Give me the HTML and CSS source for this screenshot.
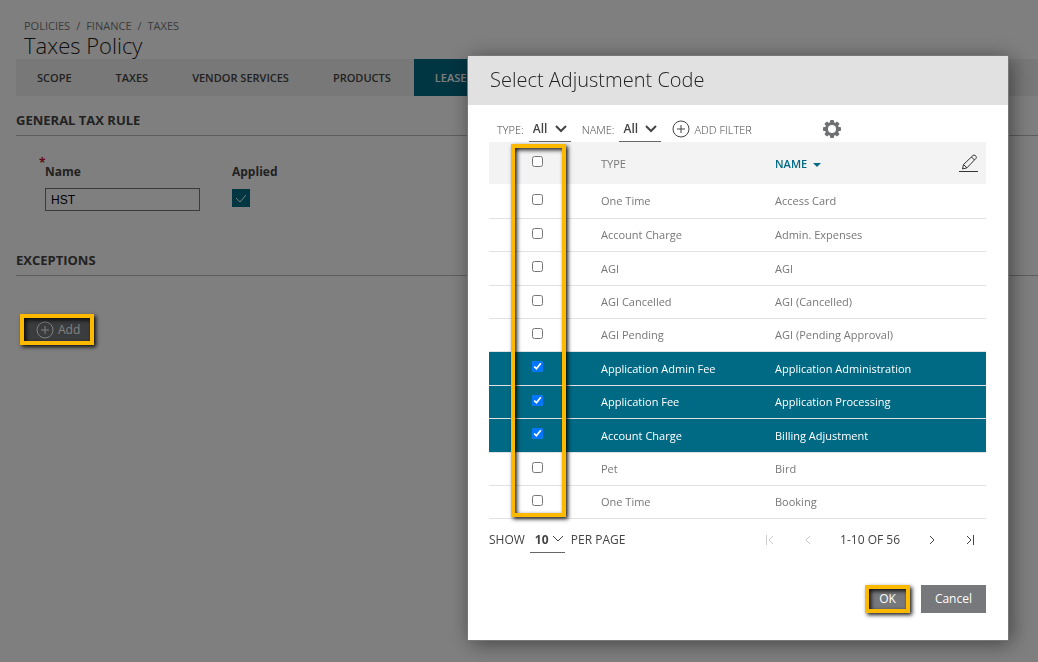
FILE: index.html
```
<!DOCTYPE html>
<html lang="en">
<head>
    <meta charset="UTF-8">
    <title>Taxes Policy</title>
    <link rel="stylesheet" href="styles.css">
</head>
<body>
    <main class="page">
        <nav class="breadcrumb">
            <a href="#">POLICIES</a><span>/</span><a href="#">FINANCE</a><span>/</span><a href="#">TAXES</a>
        </nav>
        <h1>Taxes Policy</h1>

        <nav class="tabs">
            <a href="#">SCOPE</a>
            <a href="#">TAXES</a>
            <a href="#">VENDOR SERVICES</a>
            <a href="#">PRODUCTS</a>
            <a href="#" class="active">LEASE</a>
        </nav>

        <h2>GENERAL TAX RULE</h2>
        <div class="rule-form">
            <div class="field name-field">
                <label for="ruleName"><span class="required">*</span>Name</label>
                <input type="text" id="ruleName" value="HST">
            </div>
            <div class="field">
                <label for="applied">Applied</label>
                <span class="check-box">
                    <input type="checkbox" id="applied" checked>
                    <svg viewBox="0 0 18 18"><path d="M4 9l4 4 6-7"/></svg>
                </span>
            </div>
        </div>

        <h2>EXCEPTIONS</h2>
        <div class="marked add-wrap">
            <button class="btn add-btn">
                <svg class="plus" viewBox="0 0 18 18"><circle cx="9" cy="9" r="8"/><path d="M5 9h8M9 5v8"/></svg>
                Add
            </button>
            <span class="marker"></span>
        </div>
    </main>

    <div class="overlay">
        <div class="modal" role="dialog" aria-labelledby="modalTitle">
            <header class="modal-header">
                <h2 id="modalTitle">Select Adjustment Code</h2>
            </header>

            <div class="modal-body">
                <div class="filters">
                    <label for="typeFilter">TYPE:</label>
                    <span class="select">
                        <select id="typeFilter"><option>All</option></select>
                        <svg viewBox="0 0 12 8"><path d="M1 1l5 5 5-5"/></svg>
                    </span>
                    <label for="nameFilter">NAME:</label>
                    <span class="select">
                        <select id="nameFilter"><option>All</option></select>
                        <svg viewBox="0 0 12 8"><path d="M1 1l5 5 5-5"/></svg>
                    </span>
                    <button class="add-filter">
                        <svg class="plus" viewBox="0 0 18 18"><circle cx="9" cy="9" r="8"/><path d="M5 9h8M9 5v8"/></svg>
                        ADD FILTER
                    </button>
                    <button class="icon-btn gear" aria-label="Settings">
                        <svg viewBox="0 0 18 18">
                            <circle cx="9" cy="9" r="5.5" fill="none" stroke="#6f7072" stroke-width="3"/>
                            <g fill="#6f7072">
                                <rect x="7" y="0" width="4" height="18" rx="1"/>
                                <rect x="7" y="0" width="4" height="18" rx="1" transform="rotate(45 9 9)"/>
                                <rect x="7" y="0" width="4" height="18" rx="1" transform="rotate(90 9 9)"/>
                                <rect x="7" y="0" width="4" height="18" rx="1" transform="rotate(135 9 9)"/>
                            </g>
                            <circle cx="9" cy="9" r="4" fill="#fff"/>
                        </svg>
                    </button>
                </div>

                <div class="marked">
                    <table>
                        <thead>
                            <tr>
                                <th class="check"><input type="checkbox" aria-label="Select all"></th>
                                <th class="type">TYPE</th>
                                <th class="sorted">NAME <svg viewBox="0 0 8 4"><path d="M0 0h8L4 4z"/></svg></th>
                                <th class="edit">
                                    <button class="icon-btn" aria-label="Edit columns">
                                        <svg viewBox="0 0 19 19"><path d="M3.500 15l1-4.500L14 1.500q1-1 2.200 0l.8.8q1 1 0 2L8 13.800zM12.500 3l3 3M4.500 10.500L8 13.800M0 17.500h19"/></svg>
                                    </button>
                                </th>
                            </tr>
                        </thead>
                        <tbody>
                            <tr>
                                <td class="check"><input type="checkbox" aria-label="Access Card"></td>
                                <td>One Time</td>
                                <td colspan="2">Access Card</td>
                            </tr>
                            <tr>
                                <td class="check"><input type="checkbox" aria-label="Admin. Expenses"></td>
                                <td>Account Charge</td>
                                <td colspan="2">Admin. Expenses</td>
                            </tr>
                            <tr>
                                <td class="check"><input type="checkbox" aria-label="AGI"></td>
                                <td>AGI</td>
                                <td colspan="2">AGI</td>
                            </tr>
                            <tr>
                                <td class="check"><input type="checkbox" aria-label="AGI (Cancelled)"></td>
                                <td>AGI Cancelled</td>
                                <td colspan="2">AGI (Cancelled)</td>
                            </tr>
                            <tr>
                                <td class="check"><input type="checkbox" aria-label="AGI (Pending Approval)"></td>
                                <td>AGI Pending</td>
                                <td colspan="2">AGI (Pending Approval)</td>
                            </tr>
                            <tr class="selected">
                                <td class="check"><input type="checkbox" aria-label="Application Administration" checked></td>
                                <td>Application Admin Fee</td>
                                <td colspan="2">Application Administration</td>
                            </tr>
                            <tr class="selected">
                                <td class="check"><input type="checkbox" aria-label="Application Processing" checked></td>
                                <td>Application Fee</td>
                                <td colspan="2">Application Processing</td>
                            </tr>
                            <tr class="selected">
                                <td class="check"><input type="checkbox" aria-label="Billing Adjustment" checked></td>
                                <td>Account Charge</td>
                                <td colspan="2">Billing Adjustment</td>
                            </tr>
                            <tr>
                                <td class="check"><input type="checkbox" aria-label="Bird"></td>
                                <td>Pet</td>
                                <td colspan="2">Bird</td>
                            </tr>
                            <tr>
                                <td class="check"><input type="checkbox" aria-label="Booking"></td>
                                <td>One Time</td>
                                <td colspan="2">Booking</td>
                            </tr>
                        </tbody>
                    </table>
                    <span class="marker column-marker"></span>
                </div>

                <div class="pagination">
                    <label for="perPage">SHOW</label>
                    <span class="select page-size">
                        <select id="perPage"><option>10</option></select>
                        <svg viewBox="0 0 12 8"><path d="M1 1l5 5 5-5"/></svg>
                    </span>
                    <span>PER PAGE</span>
                    <div class="pager">
                        <button class="icon-btn" aria-label="First page" disabled><svg viewBox="0 0 10 10"><path d="M1.500 0v10M8 1L4 5l4 4"/></svg></button>
                        <button class="icon-btn" aria-label="Previous page" disabled><svg viewBox="0 0 10 10"><path d="M7 1L3 5l4 4"/></svg></button>
                        <span class="range">1-10 OF 56</span>
                        <button class="icon-btn" aria-label="Next page"><svg viewBox="0 0 10 10"><path d="M3 1l4 4-4 4"/></svg></button>
                        <button class="icon-btn" aria-label="Last page"><svg viewBox="0 0 10 10"><path d="M2 1l4 4-4 4M8.500 0v10"/></svg></button>
                    </div>
                </div>

                <div class="actions">
                    <div class="marked">
                        <button class="btn">OK</button>
                        <span class="marker"></span>
                    </div>
                    <button class="btn">Cancel</button>
                </div>
            </div>
        </div>
    </div>
</body>
</html>
```
FILE: styles.css
```
* {
    margin: 0;
    padding: 0;
    box-sizing: border-box;
}

body {
    background: #fff;
    color: #444;
    font-family: 'Open Sans', sans-serif;
    font-size: 11px;
    min-height: 100vh;
}

a {
    color: inherit;
    text-decoration: none;
}

button,
select,
input {
    font-family: inherit;
    font-size: inherit;
    color: inherit;
}

svg {
    fill: none;
    stroke: currentColor;
    flex: none;
}

/* Policy page */
.page {
    padding: 18px 0 0 16px;
}

.breadcrumb {
    display: flex;
    gap: 6px;
    padding-left: 8px;
    line-height: 15px;
    color: #777;
}

h1 {
    padding-left: 8px;
    font-size: 22px;
    font-weight: 300;
    line-height: 24px;
    color: #222;
}

.tabs {
    display: flex;
    gap: 2px;
    margin-top: 2px;
    background: #f0f0f0;
    font-weight: 600;
}

.tabs a {
    padding: 0 21px;
    line-height: 37px;
}

.tabs .active {
    background: #006a84;
    color: #fff;
}

.page h2 {
    margin-top: 14px;
    padding-bottom: 5px;
    border-bottom: 1px solid #bbb;
    font-size: 13px;
    font-weight: 700;
    line-height: 20px;
}

.rule-form {
    display: flex;
    gap: 32px;
    padding: 26px 0 25px 29px;
}

.field {
    display: flex;
    flex-direction: column;
    gap: 6px;
    font-size: 12px;
}

.field label {
    position: relative;
    font-weight: 700;
    line-height: 20px;
}

.required {
    position: absolute;
    left: -6px;
    top: -9px;
    color: #c8102e;
}

.name-field input {
    width: 155px;
    height: 23px;
    padding: 0 5px;
    border: 1px solid #777;
    background: #fff;
    font-family: 'Liberation Sans', sans-serif;
    color: #000;
}

.check-box {
    display: grid;
    width: 18px;
    height: 18px;
    margin-top: 1px;
    background: #006a84;
    color: #fff;
}

.check-box > * {
    grid-area: 1 / 1;
    width: 18px;
    height: 18px;
}

.check-box input {
    appearance: none;
}

.check-box svg {
    pointer-events: none;
}

.add-wrap {
    width: 74px;
    margin: 38px 0 0 4px;
}

.btn {
    height: 28px;
    padding: 0 14px;
    border: none;
    background: #77787b;
    color: #fff;
    font-size: 12px;
}

.add-btn {
    display: flex;
    align-items: center;
    gap: 4px;
    width: 100%;
    height: 31px;
    padding-left: 16px;
}

.plus {
    width: 18px;
    height: 18px;
}

/* Yellow callout frames */
.marked {
    position: relative;
}

.marker {
    position: absolute;
    inset: 0;
    z-index: 3;
    border: 4px solid #fdb900;
    box-shadow: 2px 2px 4px rgba(0, 0, 0, 0.9), inset 2px 2px 4px rgba(0, 0, 0, 0.9);
    pointer-events: none;
}

.column-marker {
    left: 22px;
    top: 2px;
    bottom: 2px;
    right: auto;
    width: 55px;
}

/* Modal */
.overlay {
    position: fixed;
    inset: 0;
    z-index: 2;
    display: flex;
    justify-content: flex-end;
    align-items: flex-start;
    padding: 56px 30px 22px;
    background: rgba(0, 0, 0, 0.5);
}

.modal {
    width: 540px;
    background: #fff;
    box-shadow: 0 0 0 1px #777, 3px 3px 20px rgba(0, 0, 0, 0.5);
}

.modal-header {
    padding: 0 22px;
    background: #e1e1e1;
}

.modal-header h2 {
    font-size: 20px;
    font-weight: 300;
    line-height: 48px;
    padding-bottom: 1px;
    color: #222;
}

.modal-body {
    padding: 11px 22px 27px 21px;
}

.filters {
    display: flex;
    align-items: center;
    padding-left: 8px;
    color: #444;
    font-weight: 300;
}

.filters label {
    margin-right: 5px;
}

.filters .select {
    margin-right: 11px;
}

.select {
    display: grid;
    align-items: center;
    width: 42px;
    border-bottom: 1px solid #666;
    color: #444;
}

.select > * {
    grid-area: 1 / 1;
}

.select select {
    height: 25px;
    padding-left: 4px;
    border: none;
    appearance: none;
    background: none;
    font-size: 12px;
    font-weight: 600;
}

.select svg {
    justify-self: end;
    width: 12px;
    height: 8px;
    margin-right: 4px;
    stroke-width: 2;
    pointer-events: none;
}

.add-filter {
    display: flex;
    align-items: center;
    gap: 4px;
    border: none;
    background: none;
    font-weight: 300;
}

.add-filter svg {
    color: #444;
}

.icon-btn {
    display: block;
    border: none;
    background: none;
}

.icon-btn svg {
    display: block;
}

.gear {
    margin-left: 71px;
}

.gear svg {
    width: 18px;
    height: 18px;
    stroke: none;
}

table {
    width: 100%;
    border-collapse: collapse;
    table-layout: fixed;
    color: #777;
}

th {
    height: 42px;
    background: #f3f3f3;
    font-weight: 500;
    text-align: left;
}

th.check {
    width: 112px;
}

th.type {
    width: 174px;
}

th.edit {
    width: 36px;
    color: #333;
}

th.edit svg {
    width: 19px;
    height: 19px;
    margin-left: 9px;
}

th.sorted {
    color: #006a84;
    font-weight: 600;
}

.sorted svg {
    width: 8px;
    height: 4px;
    margin-left: 3px;
    vertical-align: middle;
    fill: currentColor;
    stroke: none;
}

td {
    height: 33px;
    border-bottom: 1px solid #e2e2e6;
}

tbody tr:nth-child(5n + 1) td,
tbody tr:nth-child(5n + 3) td {
    height: 34px;
}

.check {
    padding: 0 0 3px 43px;
}

.check input {
    display: block;
    width: 11px;
    height: 11px;
}

.selected td {
    background: #006a84;
    color: #fff;
    font-weight: 500;
}

.pagination {
    display: flex;
    align-items: center;
    padding-top: 8px;
    font-size: 12px;
}

.page-size {
    width: 35px;
    margin: 0 6px 0 5px;
}

.page-size select {
    padding-left: 5px;
    font-weight: 700;
}

.page-size svg {
    margin-right: 1px;
    stroke-width: 1;
}

.pager {
    display: flex;
    align-items: center;
    margin-left: auto;
    padding-right: 11px;
}

.pager svg {
    width: 10px;
    height: 10px;
}

.pager button + button {
    margin-left: 28px;
}

.pager button:disabled {
    color: #ccc;
}

.range {
    margin: 0 27px;
}

.actions {
    display: flex;
    justify-content: flex-end;
    gap: 11px;
    margin-top: 32px;
}
```
